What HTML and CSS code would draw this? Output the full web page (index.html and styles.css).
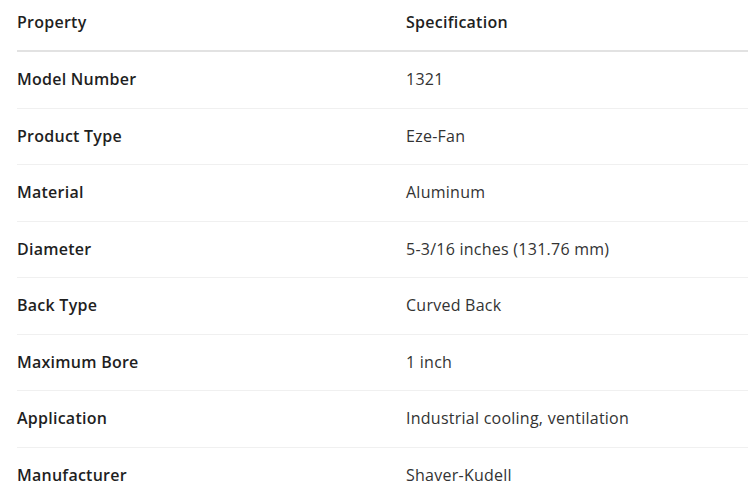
FILE: index.html
```html
<!DOCTYPE html>
<html lang="en">
<head>
<meta charset="utf-8">
<title>Specifications</title>
<link rel="stylesheet" href="styles.css">
</head>
<body>
<table class="spec-table">
  <thead>
    <tr><th class="col-prop">Property</th><th>Specification</th></tr>
  </thead>
  <tbody>
    <tr><td class="prop">Model Number</td><td>1321</td></tr>
    <tr><td class="prop">Product Type</td><td>Eze-Fan</td></tr>
    <tr><td class="prop">Material</td><td>Aluminum</td></tr>
    <tr><td class="prop">Diameter</td><td>5-3/16 inches (131.76 mm)</td></tr>
    <tr><td class="prop">Back Type</td><td>Curved Back</td></tr>
    <tr><td class="prop">Maximum Bore</td><td>1 inch</td></tr>
    <tr><td class="prop">Application</td><td>Industrial cooling, ventilation</td></tr>
    <tr><td class="prop">Manufacturer</td><td>Shaver-Kudell</td></tr>
  </tbody>
</table>
</body>
</html>
```

FILE: styles.css
```css
html, body {
  margin: 0;
  padding: 0;
  background: #ffffff;
}
body {
  font-family: "Open Sans", "Noto Sans", sans-serif;
  font-size: 16px;
  letter-spacing: 0.25px;
  color: #333333;
  overflow: hidden;
}
.spec-table {
  border-collapse: collapse;
  margin-left: 17px;
  width: calc(100% - 17px);
}
.spec-table th {
  text-align: left;
  font-weight: 600;
  color: #1f1f1f;
  padding: 10px 0 16px 0;
  line-height: 24px;
  border-bottom: 2px solid #e2e2e2;
}
.col-prop {
  width: 389px;
}
.spec-table td {
  padding: 16px 0;
  line-height: 23.57px;
  border-bottom: 1px solid #f0f0f0;
}
.spec-table td.prop {
  font-weight: 600;
  color: #1f1f1f;
}
```
